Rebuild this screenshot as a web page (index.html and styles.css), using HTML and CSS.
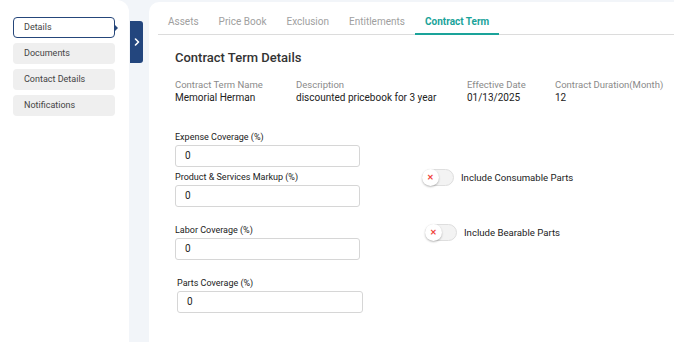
FILE: index.html
```html
<!DOCTYPE html>
<html>
<head>
<meta charset="utf-8">
<link rel="stylesheet" href="styles.css">
</head>
<body>
<div class="app">
  <aside class="sidebar">
    <div class="nav-item active">Details</div>
    <div class="nav-item">Documents</div>
    <div class="nav-item">Contact Details</div>
    <div class="nav-item">Notifications</div>
  </aside>
  <div class="collapse-btn">
    <svg width="6" height="8" viewBox="0 0 6 8"><path d="M1.5 1 L4.5 4 L1.5 7" fill="none" stroke="#fff" stroke-width="1.6" stroke-linecap="round" stroke-linejoin="round"/></svg>
  </div>
  <main class="main">
    <nav class="tabs">
      <div class="tab">Assets</div>
      <div class="tab">Price Book</div>
      <div class="tab">Exclusion</div>
      <div class="tab">Entitlements</div>
      <div class="tab active">Contract Term</div>
    </nav>
    <section class="content">
      <h2 class="title">Contract Term Details</h2>
      <div class="info">
        <div class="info-col"><div class="info-label">Contract Term Name</div><div class="info-value">Memorial Herman</div></div>
        <div class="info-col"><div class="info-label">Description</div><div class="info-value">discounted pricebook for 3 year</div></div>
        <div class="info-col"><div class="info-label">Effective Date</div><div class="info-value">01/13/2025</div></div>
        <div class="info-col"><div class="info-label">Contract Duration(Month)</div><div class="info-value">12</div></div>
      </div>
      <div class="form">
        <div class="fields">
          <div class="field">
            <label class="field-label">Expense Coverage (%)</label>
            <div class="input">0</div>
          </div>
          <div class="field f2">
            <label class="field-label">Product &amp; Services Markup (%)</label>
            <div class="input">0</div>
          </div>
          <div class="field f3">
            <label class="field-label">Labor Coverage (%)</label>
            <div class="input">0</div>
          </div>
          <div class="field f4">
            <label class="field-label">Parts Coverage (%)</label>
            <div class="input">0</div>
          </div>
        </div>
        <div class="toggles">
          <div class="toggle-row t1">
            <div class="switch"><div class="knob">&#x2715;</div></div>
            <span class="toggle-label">Include Consumable Parts</span>
          </div>
          <div class="toggle-row t2">
            <div class="switch"><div class="knob">&#x2715;</div></div>
            <span class="toggle-label">Include Bearable Parts</span>
          </div>
        </div>
      </div>
    </section>
  </main>
</div>
</body>
</html>
```

FILE: styles.css
```css
* { box-sizing: border-box; }
html, body { margin: 0; padding: 0; }
body {
  background: #f2f5f9;
  font-family: Roboto, "Liberation Sans", sans-serif;
  color: #222;
  width: 674px;
  height: 342px;
  overflow: hidden;
}
.app {
  display: flex;
  align-items: flex-start;
  height: 342px;
}
.sidebar {
  width: 129px;
  height: 342px;
  background: #fff;
  border-top-right-radius: 12px;
  padding: 17px 14px 0 13px;
  display: flex;
  flex-direction: column;
  gap: 5px;
  flex-shrink: 0;
}
.nav-item {
  position: relative;
  height: 21px;
  line-height: 21px;
  padding-left: 11px;
  font-size: 9px;
  color: #444;
  background: #efefef;
  border-radius: 4px;
}
.nav-item.active {
  background: #fff;
  border: 1px solid #25467a;
  line-height: 19px;
  padding-left: 10px;
  height: 21px;
}
.nav-item.active::after {
  content: "";
  position: absolute;
  right: -4px;
  top: 7px;
  border-left: 3px solid #25467a;
  border-top: 3px solid transparent;
  border-bottom: 3px solid transparent;
}
.collapse-btn {
  width: 13px;
  height: 42px;
  margin: 21px 0 0 1px;
  background: #23467e;
  border-radius: 0 3px 3px 0;
  display: flex;
  align-items: center;
  justify-content: center;
  flex-shrink: 0;
}
.main {
  flex: 1;
  margin: 2px 0 0 6px;
  height: 340px;
  background: #fff;
  border-top-left-radius: 10px;
}
.tabs {
  display: flex;
  margin-left: 9px;
  border-bottom: 1px solid #dcdcdc;
  height: 33px;
  align-items: flex-end;
}
.tab {
  padding: 14px 10px 0 10px;
  height: 32px;
  font-size: 10px;
  line-height: 12px;
  color: #a0a0a0;
}
.tab.active {
  color: #1aa39a;
  font-weight: 700;
  border-bottom: 2px solid #1aa39a;
  margin-bottom: -1px;
  height: 33px;
}
.content {
  padding-left: 26px;
}
.title {
  margin: 15px 0 0 0;
  font-size: 13px;
  line-height: 16px;
  font-weight: 500;
  color: #333;
}
.info {
  display: grid;
  grid-template-columns: 121px 171px 88px auto;
  margin-top: 12px;
}
.info-label {
  font-size: 9.5px;
  line-height: 13px;
  color: #8a8a8a;
}
.info-value {
  font-size: 10px;
  line-height: 13px;
  color: #222;
}
.form {
  display: flex;
  margin-top: 27px;
}
.fields {
  display: flex;
  flex-direction: column;
  width: 188px;
}
.field-label {
  display: block;
  font-size: 9px;
  line-height: 12px;
  color: #222;
}
.input {
  margin-top: 2px;
  width: 185px;
  height: 22px;
  border: 1px solid #d6d6d6;
  border-radius: 3px;
  padding-left: 9px;
  font-size: 10px;
  line-height: 20px;
  color: #222;
}
.f2 { margin-top: 4px; }
.f3 { margin-top: 17px; }
.f4 { margin-top: 17px; margin-left: 2px; }
.f4 .input { width: 186px; }
.toggles {
  margin-left: 59px;
  display: flex;
  flex-direction: column;
}
.toggle-row {
  display: flex;
  align-items: center;
}
.t1 { margin-top: 38px; }
.t2 { margin-top: 38px; margin-left: 3px; }
.switch {
  width: 32px;
  height: 17px;
  border-radius: 9px;
  background: #f3f3f3;
  border: 1px solid #dedede;
  position: relative;
}
.knob {
  position: absolute;
  left: -1px;
  top: -1px;
  width: 17px;
  height: 17px;
  border-radius: 50%;
  background: #fff;
  box-shadow: 0 1px 2px rgba(0,0,0,0.28);
  color: #f0453c;
  font-size: 8px;
  font-weight: 700;
  line-height: 17px;
  text-align: center;
}
.toggle-label {
  margin-left: 7px;
  font-size: 9.6px;
  color: #222;
}
```
